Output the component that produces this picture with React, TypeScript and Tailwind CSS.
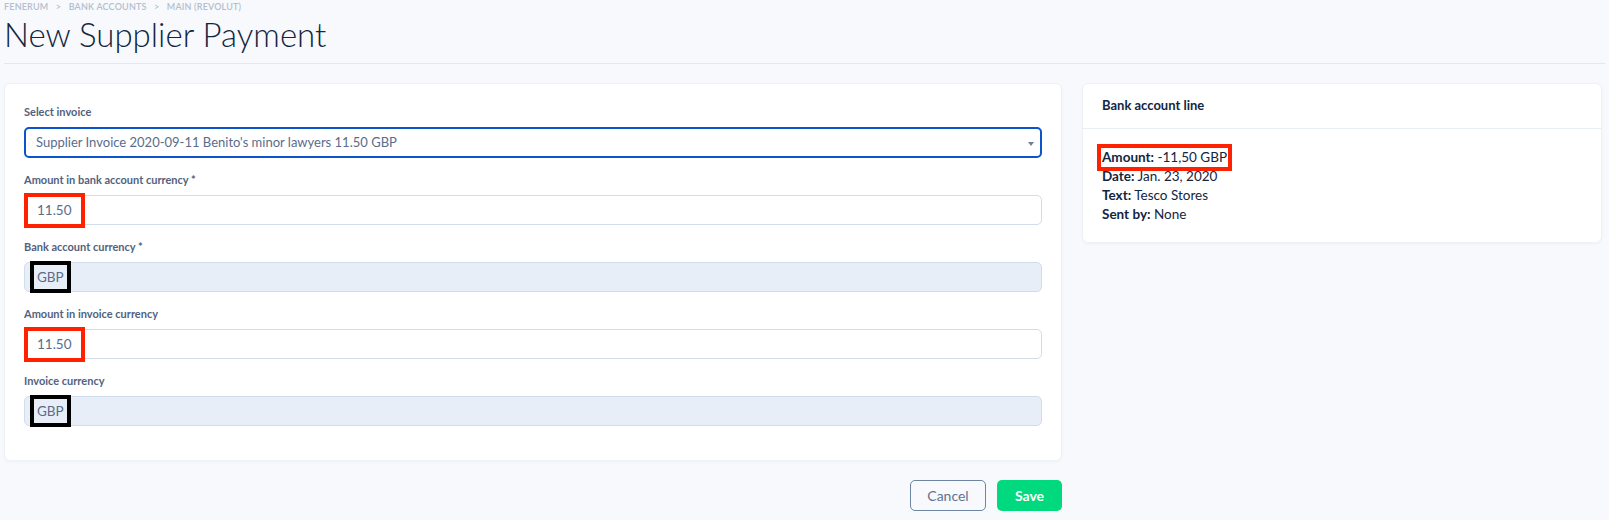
import React from "react";

const font = { fontFamily: "Lato, 'Open Sans', sans-serif" };

function Label({ children }: { children: React.ReactNode }) {
  return <div className="text-[11px] font-bold leading-[16px] text-[#52627d] mb-[7px]">{children}</div>;
}

function Field({
  label,
  value,
  disabled,
  mark,
}: {
  label: string;
  value: string;
  disabled?: boolean;
  mark: "red" | "black";
}) {
  return (
    <div className="mt-[14px]">
      <Label>{label}</Label>
      <div
        className={
          "h-[30px] w-full rounded-[5px] border border-[#d2ddec] pl-[12px] flex items-center text-[13.5px] text-[#5a6c8c] " +
          (disabled ? "bg-[#e8eef7]" : "bg-white")
        }
      >
        {mark === "red" ? (
          <span className="-ml-[9px] inline-block h-[27px] px-[9px] leading-[27px] outline-4 outline-[#ff2200]">
            {value}
          </span>
        ) : (
          <span className="-ml-[3px] inline-block h-[24px] px-[3px] leading-[24px] outline-4 outline-black">
            {value}
          </span>
        )}
      </div>
    </div>
  );
}

export default function App() {
  return (
    <div className="min-h-screen bg-[#f7f9fc] px-[4px] text-[#12263f]" style={font}>
      <div className="border-b border-[#e1e8f2] pb-[10px]">
        <div className="pt-[1px] text-[9px] font-semibold uppercase tracking-[0.02em] leading-[12px] text-[#b3bfd0]">
          Fenerum <span className="mx-[5px]">&gt;</span> Bank accounts <span className="mx-[5px]">&gt;</span> Main (Revolut)
        </div>
        <h1 className="mt-[2px] text-[33px] font-light leading-[38px] text-[#12263f]">
          New Supplier Payment
        </h1>
      </div>

      <div className="mt-[19px] flex gap-[20px]">
        <div className="w-[1058px]">
          <div className="rounded-[6px] border border-[#edf2f9] bg-white px-[19px] pt-[20px] pb-[34px] shadow-[0_1px_3px_rgba(18,38,63,0.04)]">
            <Label>Select invoice</Label>
            <div className="relative flex h-[31px] items-center rounded-[5px] border-2 border-[#0b54c9] pl-[10px] text-[13px] text-[#5a6c8c]">
              Supplier Invoice 2020-09-11 Benito's minor lawyers 11.50 GBP
              <span className="absolute right-[6px] top-[13px] h-0 w-0 border-x-[3.5px] border-t-[4px] border-x-transparent border-t-[#6e7f9c]" />
            </div>
            <Field label="Amount in bank account currency *" value="11.50" mark="red" />
            <Field label="Bank account currency *" value="GBP" disabled mark="black" />
            <Field label="Amount in invoice currency" value="11.50" mark="red" />
            <Field label="Invoice currency" value="GBP" disabled mark="black" />
          </div>
          <div className="mt-[19px] flex justify-end gap-[11px]">
            <button className="h-[31px] w-[76px] rounded-[5px] border border-[#6e84a3] bg-transparent text-[14px] text-[#5f7393]">
              Cancel
            </button>
            <button className="h-[31px] w-[65px] rounded-[5px] bg-[#00d97e] text-[14px] font-bold text-white">
              Save
            </button>
          </div>
        </div>

        <div className="w-[520px] self-start rounded-[6px] border border-[#edf2f9] bg-white shadow-[0_1px_3px_rgba(18,38,63,0.04)]">
          <div className="flex h-[45px] items-center border-b border-[#e6eef8] px-[19px] text-[13px] font-bold text-[#12263f]">
            Bank account line
          </div>
          <div className="px-[19px] pt-[19px] pb-[18px] text-[13.5px] leading-[19px] text-[#12263f]">
            <div>
              <span className="inline-block -ml-[1px] px-[1px] outline-4 outline-[#ff2200]">
                <b>Amount:</b> -11,50 GBP
              </span>
            </div>
            <div>
              <b>Date:</b> Jan. 23, 2020
            </div>
            <div>
              <b>Text:</b> Tesco Stores
            </div>
            <div>
              <b>Sent by:</b> None
            </div>
          </div>
        </div>
      </div>
    </div>
  );
}
